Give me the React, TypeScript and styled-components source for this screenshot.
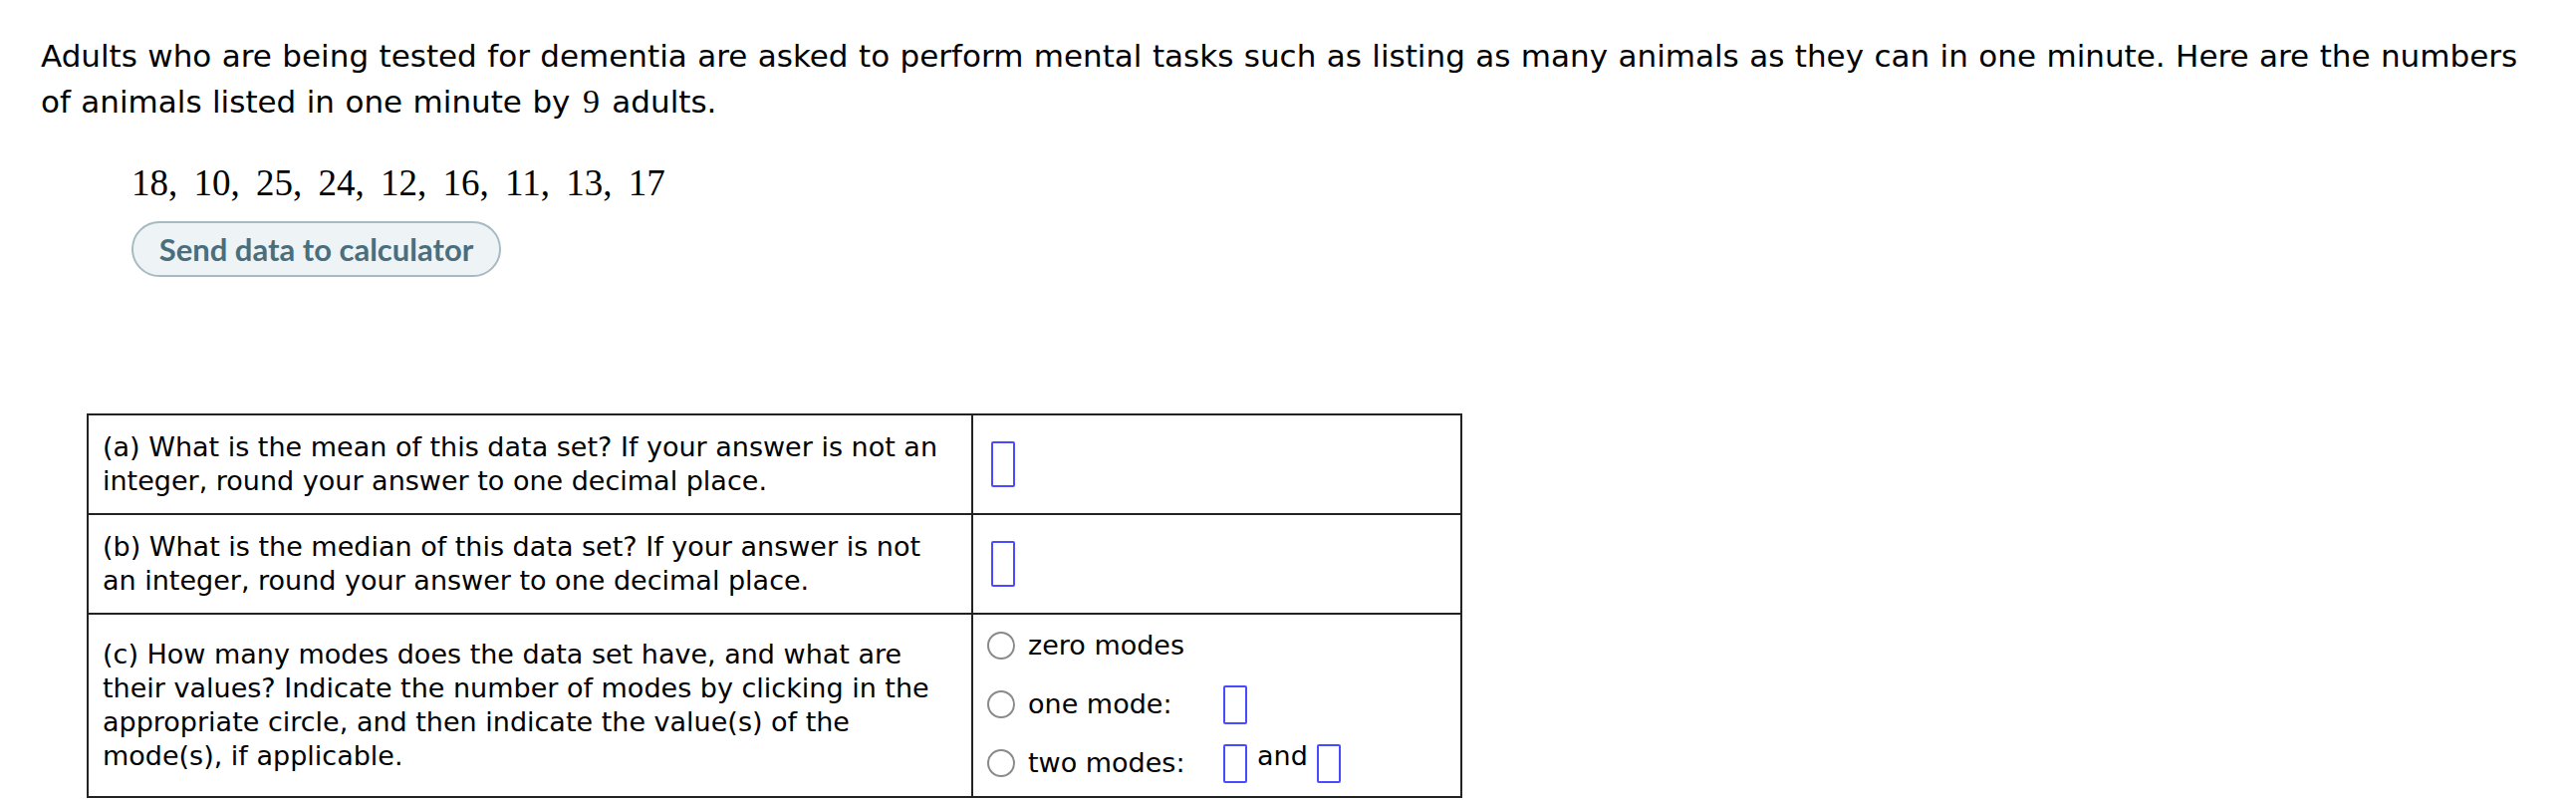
import React from "react";
import styled, { createGlobalStyle } from "styled-components";

const Global = createGlobalStyle`
  html, body { margin: 0; padding: 0; background: #ffffff; }
  body { font-family: "DejaVu Sans", Verdana, sans-serif; color: #000; }
`;

const Page = styled.div`
  padding: 33px 41px 0 41px;
  display: flex;
  flex-direction: column;
  align-items: flex-start;
`;

const Prompt = styled.p`
  margin: 0;
  font-size: 31px;
  line-height: 46px;
  word-spacing: 0.6px;
  width: 100%;
`;

const MathNum = styled.span`
  font-family: "Liberation Serif", "Times New Roman", serif;
  font-size: 34px;
  line-height: 1;
  margin: 0 2px;
`;

const DataLine = styled.div`
  margin: 38px 0 0 91px;
  font-family: "Liberation Serif", "Times New Roman", serif;
  font-size: 37px;
  line-height: 42px;
  word-spacing: 7px;
`;

const CalcButton = styled.button`
  margin: 17px 0 0 91px;
  width: 371px;
  height: 56px;
  border-radius: 28px;
  border: 2px solid #a7bac2;
  background: #eef4f6;
  color: #4b6e7d;
  font-family: "Lato", "Open Sans", sans-serif;
  font-weight: 700;
  font-size: 31px;
  padding: 0;
  cursor: pointer;
`;

const QTable = styled.table`
  margin: 137px 0 0 46px;
  border-collapse: collapse;
  width: 1381px;
  font-size: 27px;
  line-height: 34px;
`;

const QCell = styled.td`
  border: 2px solid #222;
  box-sizing: border-box;
  width: 888px;
  padding: 15px 15px 15px 14px;
  vertical-align: middle;
`;

const ACell = styled.td<{ $pad?: string }>`
  border: 2px solid #222;
  padding: ${(p) => p.$pad ?? "0 18px"};
  vertical-align: middle;
`;

const AnswerBox = styled.span<{ $h?: number }>`
  display: inline-block;
  box-sizing: border-box;
  width: 24px;
  height: ${(p) => p.$h ?? 46}px;
  border: 2px solid #4a4aff;
  border-radius: 2px;
  vertical-align: middle;
`;

const OptionList = styled.div`
  display: flex;
  flex-direction: column;
  gap: 19px;
`;

const OptionRow = styled.label`
  display: flex;
  align-items: center;
  height: 40px;
`;

const Radio = styled.input`
  appearance: none;
  margin: 0 13px 0 0;
  width: 28px;
  height: 28px;
  box-sizing: border-box;
  border: 2px solid #8a8a8a;
  border-radius: 50%;
  background: #fff;
  flex: none;
`;

const OptionLabel = styled.span<{ $w?: number }>`
  display: inline-block;
  width: ${(p) => (p.$w ? `${p.$w}px` : "auto")};
  font-size: 27px;
`;

const AndText = styled.span`
  margin: -4px 9px 0 10px;
  font-size: 27px;
  align-self: flex-start;
`;

export default function App() {
  return (
    <>
      <Global />
      <Page>
        <Prompt>
          Adults who are being tested for dementia are asked to perform mental tasks such as listing as many
          animals as they can in one minute. Here are the numbers of animals listed in one minute by{" "}
          <MathNum>9</MathNum> adults.
        </Prompt>
        <DataLine>18, 10, 25, 24, 12, 16, 11, 13, 17</DataLine>
        <CalcButton type="button">Send data to calculator</CalcButton>
        <QTable>
          <tbody>
            <tr>
              <QCell>
                (a) What is the mean of this data set? If your answer is not an integer, round your answer to
                one decimal place.
              </QCell>
              <ACell>
                <AnswerBox />
              </ACell>
            </tr>
            <tr>
              <QCell>
                (b) What is the median of this data set? If your answer is not an integer, round your answer to
                one decimal place.
              </QCell>
              <ACell>
                <AnswerBox />
              </ACell>
            </tr>
            <tr>
              <QCell>
                (c) How many modes does the data set have, and what are their values? Indicate the number of
                modes by clicking in the appropriate circle, and then indicate the value(s) of the mode(s), if
                applicable.
              </QCell>
              <ACell $pad="11px 14px 13px 14px">
                <OptionList>
                  <OptionRow>
                    <Radio type="radio" name="modes" />
                    <OptionLabel>zero modes</OptionLabel>
                  </OptionRow>
                  <OptionRow>
                    <Radio type="radio" name="modes" />
                    <OptionLabel $w={196}>one mode:</OptionLabel>
                    <AnswerBox $h={39} />
                  </OptionRow>
                  <OptionRow>
                    <Radio type="radio" name="modes" />
                    <OptionLabel $w={196}>two modes:</OptionLabel>
                    <AnswerBox $h={39} />
                    <AndText>and</AndText>
                    <AnswerBox $h={39} />
                  </OptionRow>
                </OptionList>
              </ACell>
            </tr>
          </tbody>
        </QTable>
      </Page>
    </>
  );
}
